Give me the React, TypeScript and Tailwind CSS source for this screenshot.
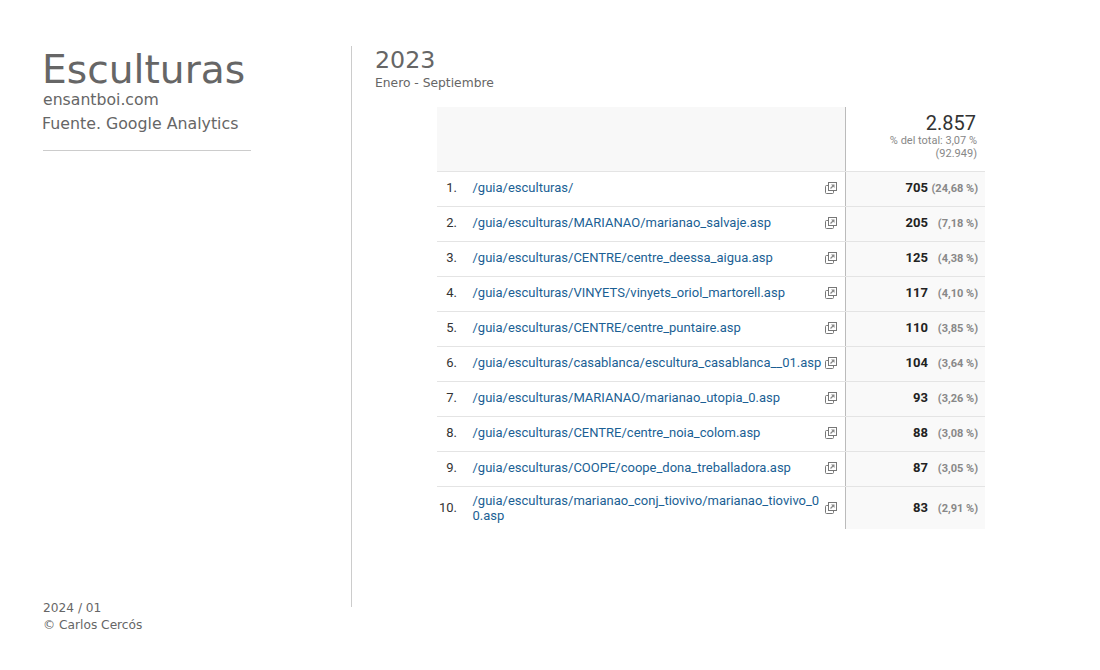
const rows = [
  ["1.", "/guia/esculturas/", "705", "(24,68 %)"],
  ["2.", "/guia/esculturas/MARIANAO/marianao_salvaje.asp", "205", "(7,18 %)"],
  ["3.", "/guia/esculturas/CENTRE/centre_deessa_aigua.asp", "125", "(4,38 %)"],
  ["4.", "/guia/esculturas/VINYETS/vinyets_oriol_martorell.asp", "117", "(4,10 %)"],
  ["5.", "/guia/esculturas/CENTRE/centre_puntaire.asp", "110", "(3,85 %)"],
  ["6.", "/guia/esculturas/casablanca/escultura_casablanca__01.asp", "104", "(3,64 %)"],
  ["7.", "/guia/esculturas/MARIANAO/marianao_utopia_0.asp", "93", "(3,26 %)"],
  ["8.", "/guia/esculturas/CENTRE/centre_noia_colom.asp", "88", "(3,08 %)"],
  ["9.", "/guia/esculturas/COOPE/coope_dona_treballadora.asp", "87", "(3,05 %)"],
  ["10.", "/guia/esculturas/marianao_conj_tiovivo/marianao_tiovivo_00.asp", "83", "(2,91 %)"],
];

function LinkIcon() {
  return (
    <svg width="12" height="12" viewBox="0 0 12 12" fill="none" className="shrink-0">
      <rect x="3.5" y="0.5" width="8" height="8" fill="#fff" stroke="#777" />
      <path d="M5.5 6.5 L8.5 3.5" stroke="#888" strokeWidth="1.2" />
      <path d="M6 2.5 H9.5 V6 Z" fill="#888" />
      <path d="M3.5 3.5 H1.5 Q0.5 3.5 0.5 4.5 V10.5 Q0.5 11.5 1.5 11.5 H7.5 Q8.5 11.5 8.5 10.5 V8.5" stroke="#777" />
    </svg>
  );
}

export default function App() {
  return (
    <div className="w-[1100px] h-[670px] bg-white flex pt-[46px] font-['DejaVu_Sans',sans-serif] text-[#666666] overflow-hidden">
      <aside className="w-[352px] h-[561px] border-r border-[#cccccc] pl-[43px] flex flex-col shrink-0">
        <h1 className="text-[39.2px] leading-[46px] -ml-[1px] mt-[1px]">Esculturas</h1>
        <div className="text-[15.7px] leading-[18px] mt-[-2px]">ensantboi.com</div>
        <div className="text-[15.8px] leading-[18px] mt-[6px] -ml-[1px]">Fuente. Google Analytics</div>
        <div className="w-[208px] border-t border-[#cccccc] mt-[17px]" />
        <div className="mt-auto text-[12.2px] leading-[17px] -mb-[27px]">
          <div>2024 / 01</div>
          <div>© Carlos Cercós</div>
        </div>
      </aside>
      <main className="pl-[23px] flex-1">
        <div className="text-[23.7px] leading-[28px]">2023</div>
        <div className="text-[12.3px] leading-[16px] mt-[1px]">Enero - Septiembre</div>
        <div className="ml-[62px] mt-[16px] w-[548px] font-['Roboto',sans-serif]">
          <div className="flex h-[65px] bg-[#f8f8f8] border-b border-[#e4e4e4]">
            <div className="w-[409px] border-r border-[#bbbbbb]" />
            <div className="flex-1 bg-white pr-[8px] pt-[6px] text-right">
              <div className="text-[20px] leading-[21px] text-[#333333] mr-[1px]">2.857</div>
              <div className="text-[11px] leading-[13px] text-[#888888] ml-[24px]">% del total: 3,07 % (92.949)</div>
            </div>
          </div>
          {rows.map(([n, path, v, pct], i) => {
            const last = i === rows.length - 1;
            return (
              <div key={n} className={last ? "flex h-[42px]" : "flex border-b border-[#e4e4e4] h-[35px]"}>
                <div className={last ? "w-[409px] flex items-center border-r border-[#bbbbbb]" : "w-[409px] flex items-center border-r border-[#bbbbbb] pb-[3px]"}>
                  <div className={last ? "w-[20px] text-right text-[13px] leading-[15px] text-[#333333] shrink-0 mb-[2px] pl-[1px]" : "w-[20px] text-right text-[13px] leading-[15px] text-[#333333] shrink-0"}>{n}</div>
                  <div className="ml-[15.5px] w-[350.5px] text-[13px] leading-[15px] text-[#1b5f94] break-all shrink-0">{path}</div>
                  <div className="ml-[2px]"><LinkIcon /></div>
                </div>
                <div className={last ? "flex-1 bg-[#f9f9f9] flex items-center justify-end pr-[7px]" : "flex-1 bg-[#f9f9f9] flex items-center justify-end pr-[7px] pb-[3px]"}>
                  <div className="flex items-baseline">
                    <span className="font-bold text-[13px] text-[#222222]">{v}</span>
                    <span className="w-[50px] text-right text-[11px] font-bold text-[#888888] shrink-0">{pct}</span>
                  </div>
                </div>
              </div>
            );
          })}
        </div>
      </main>
    </div>
  );
}
